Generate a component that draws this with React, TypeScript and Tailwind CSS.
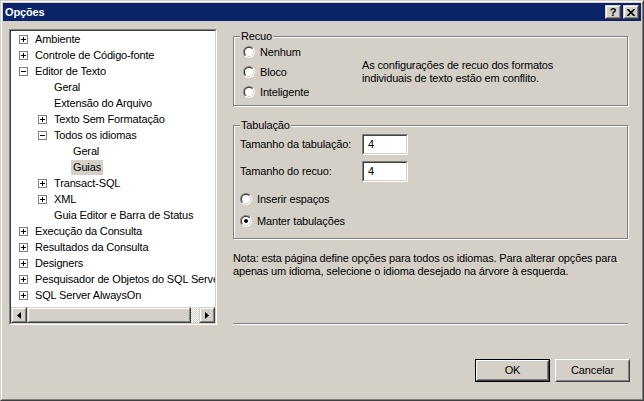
import { ReactNode } from 'react'

type Node = {
  label: string
  level: 0 | 1 | 2
  exp?: '+' | '-'
  selected?: boolean
}

const tree: Node[] = [
  { label: 'Ambiente', level: 0, exp: '+' },
  { label: 'Controle de Código-fonte', level: 0, exp: '+' },
  { label: 'Editor de Texto', level: 0, exp: '-' },
  { label: 'Geral', level: 1 },
  { label: 'Extensão do Arquivo', level: 1 },
  { label: 'Texto Sem Formatação', level: 1, exp: '+' },
  { label: 'Todos os idiomas', level: 1, exp: '-' },
  { label: 'Geral', level: 2 },
  { label: 'Guias', level: 2, selected: true },
  { label: 'Transact-SQL', level: 1, exp: '+' },
  { label: 'XML', level: 1, exp: '+' },
  { label: 'Guia Editor e Barra de Status', level: 1 },
  { label: 'Execução da Consulta', level: 0, exp: '+' },
  { label: 'Resultados da Consulta', level: 0, exp: '+' },
  { label: 'Designers', level: 0, exp: '+' },
  { label: 'Pesquisador de Objetos do SQL Server', level: 0, exp: '+' },
  { label: 'SQL Server AlwaysOn', level: 0, exp: '+' },
]

const indent = ['pl-[8px]', 'pl-[27px]', 'pl-[46px]']

const Expander = ({ sign }: { sign: '+' | '-' }) => (
  <svg width="9" height="9" viewBox="0 0 9 9" shapeRendering="crispEdges" className="shrink-0">
    <rect x="0.5" y="0.5" width="8" height="8" fill="#fff" stroke="#808080" />
    <path d="M2 4.5H7" stroke="#000" />
    {sign === '+' && <path d="M4.5 2V7" stroke="#000" />}
  </svg>
)

const Radio = ({ checked = false }: { checked?: boolean }) => (
  <svg width="12" height="12" viewBox="0 0 12 12" className="shrink-0">
    <defs>
      <linearGradient id="radio-outer" x1="0" y1="0" x2="1" y2="1">
        <stop offset="0.5" stopColor="#808080" />
        <stop offset="0.5" stopColor="#ffffff" />
      </linearGradient>
      <linearGradient id="radio-inner" x1="0" y1="0" x2="1" y2="1">
        <stop offset="0.5" stopColor="#404040" />
        <stop offset="0.5" stopColor="#d4d0c8" />
      </linearGradient>
    </defs>
    <circle cx="6" cy="6" r="6" fill="url(#radio-outer)" />
    <circle cx="6" cy="6" r="5" fill="url(#radio-inner)" />
    <circle cx="6" cy="6" r="4" fill="#fff" />
    {checked && <circle cx="6" cy="6" r="2" fill="#000" />}
  </svg>
)

// raised 3d edge used by scrollbar parts and caption buttons
const Raised = ({ className = '', children }: { className?: string; children?: ReactNode }) => (
  <div className={`shrink-0 border border-t-[#d4d0c8] border-l-[#d4d0c8] border-r-[#404040] border-b-[#404040] bg-[#d4d0c8] ${className}`}>
    <div className="flex h-full w-full items-center justify-center border border-t-white border-l-white border-r-[#808080] border-b-[#808080]">
      {children}
    </div>
  </div>
)

const PushButton = ({ label, isDefault = false }: { label: string; isDefault?: boolean }) => {
  const body = (
    <div className="h-full w-full border border-t-white border-l-white border-r-[#404040] border-b-[#404040]">
      <div className="flex h-full w-full items-center justify-center border border-t-[#d4d0c8] border-l-[#d4d0c8] border-r-[#808080] border-b-[#808080]">
        {label}
      </div>
    </div>
  )
  return isDefault ? (
    <div className="h-[23px] w-[75px] border border-black">{body}</div>
  ) : (
    <div className="h-[23px] w-[75px]">{body}</div>
  )
}

const GroupBox = ({ title, className = '', children }: { title: string; className?: string; children: ReactNode }) => (
  <div className={`relative border border-[#808080] shadow-[inset_1px_1px_0_#fff,1px_1px_0_#fff] ${className}`}>
    <span className="absolute -top-[7px] left-[6px] bg-[#d4d0c8] px-px">{title}</span>
    {children}
  </div>
)

const TextBox = ({ value }: { value: string }) => (
  <div className="h-[21px] w-[46px] border border-t-[#808080] border-l-[#808080] border-r-white border-b-white">
    <div className="flex h-full w-full items-center border border-t-[#404040] border-l-[#404040] border-r-[#d4d0c8] border-b-[#d4d0c8] bg-white pl-[4px]">
      {value}
    </div>
  </div>
)

const RadioRow = ({ label, checked }: { label: string; checked?: boolean }) => (
  <div className="flex h-[20px] items-center gap-[5px]">
    <Radio checked={checked} />
    <span>{label}</span>
  </div>
)

const TreeView = () => (
  <div className="h-[296px] w-[208px] shrink-0 border border-t-[#808080] border-l-[#808080] border-r-white border-b-white">
    <div className="flex h-full w-full flex-col border border-t-[#404040] border-l-[#404040] border-r-[#d4d0c8] border-b-[#d4d0c8] bg-white">
      <div className="flex-1 overflow-hidden whitespace-nowrap">
        {tree.map((n, i) => (
          <div key={i} className={`flex h-[16px] items-center ${indent[n.level]}`}>
            {n.exp ? <Expander sign={n.exp} /> : <span className="w-[9px] shrink-0" />}
            {n.selected ? (
              <span className="ml-[5px] flex h-[15px] items-center bg-[#d4d0c8] px-[2px]">{n.label}</span>
            ) : (
              <span className="ml-[7px]">{n.label}</span>
            )}
          </div>
        ))}
      </div>
      <div className="flex h-[16px] shrink-0">
        <Raised className="h-[16px] w-[16px]">
          <svg width="4" height="7" viewBox="0 0 4 7">
            <path d="M4 0V7L0 3.5Z" fill="#000" />
          </svg>
        </Raised>
        <Raised className="h-[16px] w-[164px]" />
        <div className="h-[16px] flex-1 bg-[repeating-conic-gradient(#d4d0c8_0_25%,#fff_0_50%)] bg-[length:2px_2px]" />
        <Raised className="h-[16px] w-[16px]">
          <svg width="4" height="7" viewBox="0 0 4 7">
            <path d="M0 0V7L4 3.5Z" fill="#000" />
          </svg>
        </Raised>
      </div>
    </div>
  </div>
)

export default function App() {
  return (
    <div className="h-[401px] w-[644px] border border-t-[#d4d0c8] border-l-[#d4d0c8] border-r-[#404040] border-b-[#404040] bg-[#d4d0c8] font-['Liberation_Sans',sans-serif] text-[11px] leading-[13px] tracking-[-0.15px] text-black">
      <div className="flex h-full flex-col border border-t-white border-l-white border-r-[#808080] border-b-[#808080] p-px">
        {/* caption */}
        <div className="flex h-[18px] shrink-0 items-center bg-[#0a246a] pl-[2px] pr-[2px]">
          <span className="font-bold text-white">Opções</span>
          <div className="ml-auto flex gap-[2px]">
            <Raised className="h-[14px] w-[16px]">
              <span className="text-[11px] font-bold leading-none">?</span>
            </Raised>
            <Raised className="h-[14px] w-[16px]">
              <svg width="8" height="7" viewBox="0 0 8 7">
                <path d="M0.5 0L7.5 7M7.5 0L0.5 7" stroke="#000" strokeWidth="1.6" />
              </svg>
            </Raised>
          </div>
        </div>

        <div className="flex flex-1 flex-col px-[6px] pt-[8px]">
          <div className="flex">
            <TreeView />

            <div className="ml-[16px] flex h-[296px] w-[395px] shrink-0 flex-col pt-[7px]">
              <GroupBox title="Recuo" className="flex h-[70px]">
                <div className="w-[128px] shrink-0 pl-[9px] pt-[5px]">
                  <RadioRow label="Nenhum" />
                  <RadioRow label="Bloco" />
                  <RadioRow label="Inteligente" />
                </div>
                <p className="self-center whitespace-nowrap pt-[1px]">
                  As configurações de recuo dos formatos
                  <br />
                  individuais de texto estão em conflito.
                </p>
              </GroupBox>

              <GroupBox title="Tabulação" className="mt-[19px] h-[114px] pl-[6px] pt-[8px]">
                <div className="flex h-[21px] items-center">
                  <span className="w-[122px]">Tamanho da tabulação:</span>
                  <TextBox value="4" />
                </div>
                <div className="mt-[6px] flex h-[21px] items-center">
                  <span className="w-[122px]">Tamanho do recuo:</span>
                  <TextBox value="4" />
                </div>
                <div className="mt-[6px]">
                  <div className="flex h-[22px] items-center gap-[5px]">
                    <Radio />
                    <span>Inserir espaços</span>
                  </div>
                  <div className="flex h-[22px] items-center gap-[5px]">
                    <Radio checked />
                    <span>Manter tabulações</span>
                  </div>
                </div>
              </GroupBox>

              <p className="mt-[13px] whitespace-nowrap">
                Nota: esta página define opções para todos os idiomas. Para alterar opções para
                <br />
                apenas um idioma, selecione o idioma desejado na árvore à esquerda.
              </p>

              <div className="mt-auto h-[2px] w-full border-t border-t-[#808080] border-b border-b-white" />
            </div>
          </div>

          <div className="mt-[34px] flex justify-end gap-[5px] pr-[5px]">
            <PushButton label="OK" isDefault />
            <PushButton label="Cancelar" />
          </div>
        </div>
      </div>
    </div>
  )
}
